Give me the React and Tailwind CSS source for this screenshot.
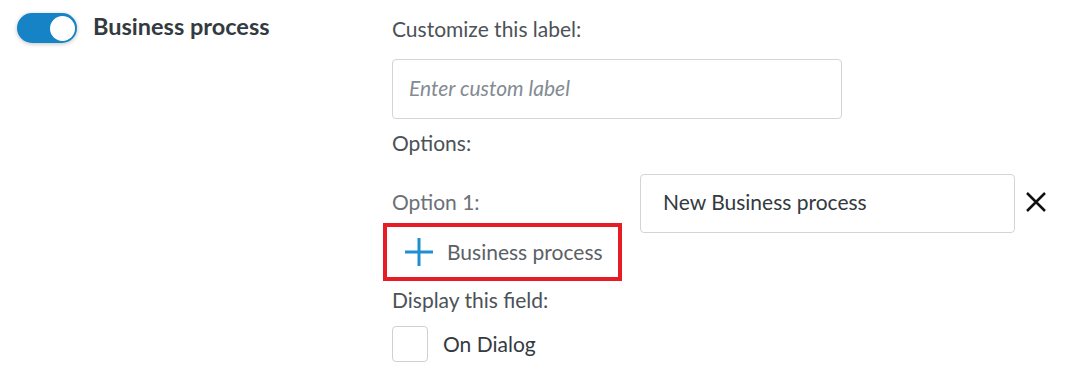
export default function App() {
  return (
    <div className="w-[1070px] h-[375px] bg-white flex overflow-hidden" style={{ fontFamily: "Lato, 'Open Sans', sans-serif" }}>
      <div className="w-[392px] shrink-0 pl-[17px] pt-[13px] flex items-start gap-4">
        <div className="relative w-[60px] h-[30px] rounded-full bg-[#1583c5] shadow-[0_1px_4px_rgba(0,0,0,0.25)] shrink-0">
          <div className="absolute right-[2px] top-[2.5px] w-[25px] h-[25px] rounded-full bg-white"></div>
        </div>
        <div className="text-[23.5px] leading-[28px] font-bold text-[#333a40] mt-[-1px]">Business process</div>
      </div>
      <div className="flex flex-col pt-[17px]">
        <div className="text-[21px] leading-[24px] text-[#4c5257]">Customize this label:</div>
        <div className="mt-[18px] w-[450px] h-[60px] border border-[#d1d5d9] rounded-[4px] flex items-center px-4">
          <span className="italic mb-[2px] text-[21px] text-[#838b93]">Enter custom label</span>
        </div>
        <div className="mt-[12px] text-[21px] leading-[24px] text-[#4c5257]">Options:</div>
        <div className="mt-[19px] flex items-center">
          <div className="w-[248px] pb-[4px] text-[21px] leading-[24px] text-[#6b7177]">Option 1:</div>
          <div className="w-[375px] h-[59px] border border-[#d1d5d9] rounded-[4px] flex items-center px-[22px]">
            <span className="mb-[3px] text-[21px] text-[#333a40]">New Business process</span>
          </div>
          <svg className="ml-[11px] mb-[3px]" width="20" height="20" viewBox="0 0 20 20">
            <path d="M1 1 L19 19 M19 1 L1 19" stroke="#111" strokeWidth="2.5" fill="none" />
          </svg>
        </div>
        <div className="mt-[-10px] ml-[-9px] w-[239px] h-[58px] border-[4px] border-[#e81c24] flex items-center pl-[18px]">
          <svg width="28" height="28" viewBox="0 0 28 28">
            <path d="M14 0 V28 M0 14 H28" stroke="#1f8fd2" strokeWidth="3" fill="none" />
          </svg>
          <span className="ml-[14px] mb-[1px] text-[21px] text-[#5b6166]">Business process</span>
        </div>
        <div className="mt-[7px] text-[21px] leading-[24px] text-[#4c5257]">Display this field:</div>
        <div className="mt-[14px] flex items-center">
          <div className="w-[36px] h-[36px] border border-[#ccd1d5] rounded-[4px]"></div>
          <span className="ml-[15px] mb-[1px] text-[21px] text-[#333a40]">On Dialog</span>
        </div>
      </div>
    </div>
  );
}
